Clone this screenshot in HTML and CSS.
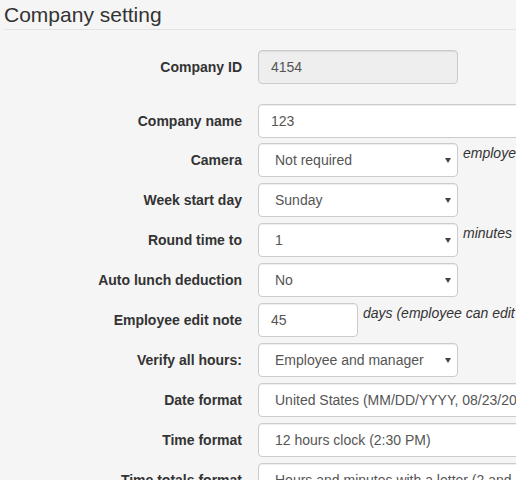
FILE: index.html
```html
<!DOCTYPE html>
<html>
<head>
<meta charset="utf-8">
<title>Company setting</title>
<link rel="stylesheet" href="styles.css">
</head>
<body>
<div class="page">
  <h1 class="legend">Company setting</h1>
  <form class="form">
    <div class="row row-id">
      <label class="label">Company ID</label>
      <input class="control w200" type="text" value="4154" disabled>
    </div>
    <div class="row row-name">
      <label class="label">Company name</label>
      <input class="control wide" type="text" value="123">
    </div>
    <div class="row">
      <label class="label">Camera</label>
      <div class="select-wrap w200">
        <select class="control sel"><option>Not required</option></select>
        <svg class="arrow" width="6" height="5" viewBox="0 0 6 5"><polygon points="0,0 6,0 3,5"/></svg>
      </div>
      <span class="help">employee photo</span>
    </div>
    <div class="row">
      <label class="label">Week start day</label>
      <div class="select-wrap w200">
        <select class="control sel"><option>Sunday</option></select>
        <svg class="arrow" width="6" height="5" viewBox="0 0 6 5"><polygon points="0,0 6,0 3,5"/></svg>
      </div>
    </div>
    <div class="row">
      <label class="label">Round time to</label>
      <div class="select-wrap w200">
        <select class="control sel"><option>1</option></select>
        <svg class="arrow" width="6" height="5" viewBox="0 0 6 5"><polygon points="0,0 6,0 3,5"/></svg>
      </div>
      <span class="help">minutes</span>
    </div>
    <div class="row">
      <label class="label">Auto lunch deduction</label>
      <div class="select-wrap w200">
        <select class="control sel"><option>No</option></select>
        <svg class="arrow" width="6" height="5" viewBox="0 0 6 5"><polygon points="0,0 6,0 3,5"/></svg>
      </div>
    </div>
    <div class="row">
      <label class="label">Employee edit note</label>
      <input class="control w100" type="text" value="45">
      <span class="help">days (employee can edit notes)</span>
    </div>
    <div class="row">
      <label class="label">Verify all hours:</label>
      <div class="select-wrap w200">
        <select class="control sel"><option>Employee and manager</option></select>
        <svg class="arrow" width="6" height="5" viewBox="0 0 6 5"><polygon points="0,0 6,0 3,5"/></svg>
      </div>
    </div>
    <div class="row">
      <label class="label">Date format</label>
      <div class="select-wrap wide">
        <select class="control sel"><option>United States (MM/DD/YYYY, 08/23/2016)</option></select>
      </div>
    </div>
    <div class="row">
      <label class="label">Time format</label>
      <div class="select-wrap wide">
        <select class="control sel"><option>12 hours clock (2:30 PM)</option></select>
      </div>
    </div>
    <div class="row">
      <label class="label">Time totals format</label>
      <div class="select-wrap wide">
        <select class="control sel"><option>Hours and minutes with a letter (2 and 30 min)</option></select>
      </div>
    </div>
  </form>
</div>
</body>
</html>
```

FILE: styles.css
```css
html, body {
  margin: 0;
  padding: 0;
  overflow: hidden;
  background: #f5f5f5;
}

body {
  font-family: "Liberation Sans", Arial, sans-serif;
  font-size: 14px;
  line-height: 20px;
  color: #333;
}

.page {
  padding-left: 4px;
}

.legend {
  margin: 0 0 20px 0;
  padding: 0;
  font-size: 21px;
  font-weight: normal;
  line-height: 29px;
  height: 29px;
  color: #333;
  border-bottom: 1px solid #e3e3e3;
}

.form {
  margin: 0;
}

.row {
  display: flex;
  align-items: flex-start;
  margin-bottom: 6px;
  white-space: nowrap;
}

.row-id {
  margin-bottom: 20px;
}

.row-name {
  margin-bottom: 5px;
}

.label {
  flex: 0 0 238px;
  margin-right: 16px;
  padding-top: 7px;
  text-align: right;
  font-weight: bold;
  line-height: 20px;
  color: #333;
}

.control {
  box-sizing: border-box;
  height: 34px;
  padding: 6px 12px;
  font-family: "Liberation Sans", Arial, sans-serif;
  font-size: 14px;
  line-height: 20px;
  color: #555;
  background: #fff;
  border: 1px solid #ccc;
  border-radius: 4px;
  box-shadow: inset 0 1px 1px rgba(0, 0, 0, 0.075);
  margin: 0;
  flex: none;
}

.control:disabled {
  background: #eee;
  color: #555;
  opacity: 1;
}

.w200 { width: 200px; }
.w100 { width: 100px; }
.wide { width: 330px; }

.select-wrap {
  position: relative;
  flex: none;
  height: 34px;
}

.sel {
  -webkit-appearance: none;
  appearance: none;
  width: 100%;
  padding-left: 16px;
}

.arrow {
  position: absolute;
  right: 7px;
  top: 15px;
  fill: #444;
}

.help {
  margin-left: 5px;
  font-style: italic;
  color: #333;
  line-height: 20px;
}
```
